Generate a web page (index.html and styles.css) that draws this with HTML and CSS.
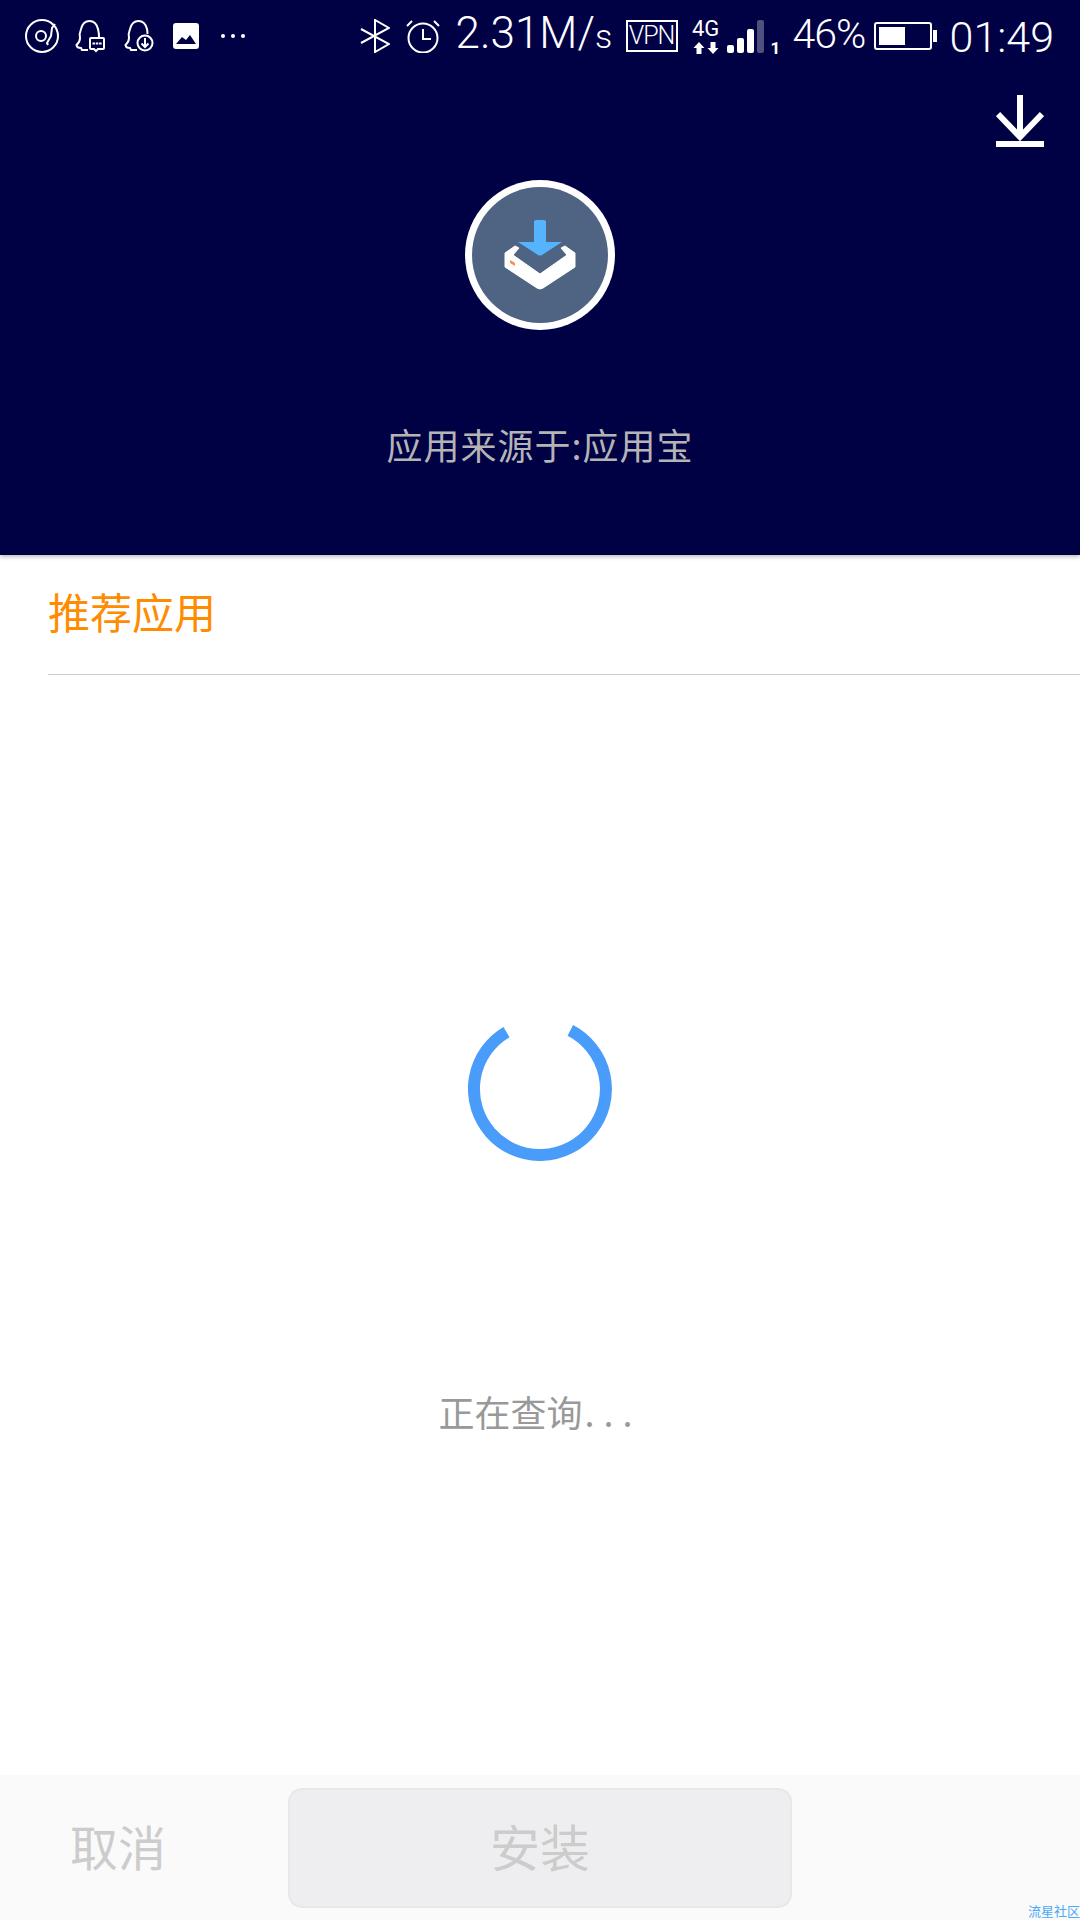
FILE: index.html
```html
<!DOCTYPE html>
<html lang="zh-Hans">
<head>
    <meta charset="UTF-8">
    <meta name="viewport" content="width=device-width, initial-scale=1.0">
    <title>应用安装</title>
    <link rel="stylesheet" href="styles.css">
</head>
<body>
    <div class="page">
        <header class="top">
            <div class="status">
                <div class="status-left">
                    <svg class="sicon" viewBox="0 0 34 34"><circle cx="17" cy="17" r="16" class="ln"/><circle cx="16" cy="17" r="5" class="ln"/><path d="M30 5 L27 9 L26 17 L22 24 L23 26" class="ln"/></svg>
                    <svg class="sicon" viewBox="0 0 34 34"><path d="M14 31 H8 L7 29 Q3 29 2.500 26 Q6 23 6 19 Q5 15 7 10 Q9 2 15.500 2 Q22 2 24 10 Q25 14 25 18" class="ln"/><path d="M17 19 H29 Q30 19 30 20 V29 Q30 30 29 30 H24 L22 32 L20 30 H17 Q16 30 16 29 V20 Q16 19 17 19 Z" class="ln"/><path d="M18.500 24.500h2.500M21.800 24.500h2.500M25.100 24.500h2.500" class="ln"/></svg>
                    <svg class="sicon" viewBox="0 0 34 34"><path d="M14 31 H8 L7 29 Q3 29 2.500 26 Q6 23 6 19 Q5 15 7 10 Q9 2 15.500 2 Q22 2 24 10 Q24.500 12 24.500 15" class="ln"/><circle cx="22" cy="24" r="7.500" class="ln"/><path d="M22 19v9M18.500 24.500l3.500 3.500 3.500-3.500" class="ln"/></svg>
                    <svg class="sicon" viewBox="0 0 34 34"><rect x="1" y="4" width="26" height="26" rx="3" fill="#fff"/><path d="M4 25 L10 18 L14 21 L18 16 L24 25 Z" fill="#000045"/></svg>
                    <div class="dots"><i></i><i></i><i></i></div>
                </div>
                <div class="status-right">
                    <svg class="bt" viewBox="0 0 30 34"><path d="M1 10 L29 25 L15 33 V1 L29 9 L1 24" class="ln"/></svg>
                    <svg class="alarm" viewBox="0 0 34 34"><circle cx="17" cy="19" r="14.500" class="ln"/><path d="M17 10v10h8" class="ln"/><path d="M1 7 L6 2M33 7 L28 2" class="ln"/></svg>
                    <span class="speed">2.31M/<span class="speed-unit">s</span></span>
                    <span class="vpn">VPN</span>
                    <div class="net">
                        <span class="net-label">4G</span>
                        <svg class="net-arrows" viewBox="0 0 26 12"><path d="M6 0 L11.500 6 H8.500 V12 H3.500 V6 H.5 Z M20 12 L25.500 6 H22.500 V0 H17.500 V6 H14.500 Z" fill="#fff"/></svg>
                    </div>
                    <div class="signal">
                        <i class="b1"></i><i class="b2"></i><i class="b3"></i><i class="b4"></i>
                    </div>
                    <span class="sim">1</span>
                    <span class="pct">46%</span>
                    <div class="battery"><div class="battery-fill"></div></div>
                    <span class="time">01:49</span>
                </div>
            </div>
            <div class="top-action">
                <svg class="dl" viewBox="0 0 48 52"><path d="M24 0 V42 M2 19 L24 42 L46 19" fill="none" stroke="#fff" stroke-width="6"/><rect y="46" width="48" height="6" fill="#fff"/></svg>
            </div>
            <div class="app-icon">
                <svg viewBox="7 7 136 136">
                    <path d="M50 66 L40 73 V87 L72 108 Q75 110 78 108 L110 87 V73 L100 66 L96 68 L102 75 L75 94 L48 75 L54 68 Z" fill="#fff" stroke="#fff" stroke-linejoin="round"/>
                    <path d="M45 80 L50 83 V86 L45 83 Z" fill="#ff8a4a"/>
                    <path d="M69 42 Q69 40 71 40 H79 Q81 40 81 42 V62 H97 L77 75 Q75 76 73 75 L53 62 H69 Z" fill="#56b4ff"/>
                </svg>
            </div>
            <p class="source">应用来源于:应用宝</p>
        </header>

        <section class="recommend">
            <h2 class="recommend-title">推荐应用</h2>
        </section>

        <div class="loading">
            <svg class="spinner" viewBox="0 0 144 144"><path d="M38.500 15.100 A66 66 0 1 0 102.300 13.400" fill="none" stroke="#4a9cfb" stroke-width="12"/></svg>
            <p class="loading-text">正在查询<span class="loading-dots">...</span></p>
        </div>

        <footer class="bottom">
            <a class="cancel">取消</a>
            <a class="install">安装</a>
            <span class="mark">流星社区</span>
        </footer>
    </div>
</body>
</html>
```

FILE: styles.css
```css
body {
    margin: 0;
    font-family: "Noto Sans CJK SC", "Noto Sans", sans-serif;
    background-color: #ffffff;
}
p, h2 {
    margin: 0;
    font-weight: 400;
}
.page {
    width: 1080px;
    height: 1920px;
    overflow: hidden;
    display: flex;
    flex-direction: column;
}
.ln {
    fill: none;
    stroke: #fff;
    stroke-width: 2;
}
.top {
    height: 555px;
    flex: none;
    background-color: #000045;
    box-shadow: 0 2px 4px rgba(0,0,0,0.25);
    position: relative;
    display: flex;
    flex-direction: column;
    color: #fff;
}
.status {
    height: 72px;
    display: flex;
    align-items: center;
    justify-content: space-between;
    padding: 0 26px 0 25px;
    font-family: Roboto, "Liberation Sans", sans-serif;
}
.status-left {
    display: flex;
    align-items: center;
    gap: 15px;
}
.status-right {
    display: flex;
    align-items: center;
}
.sicon {
    width: 34px;
    height: 34px;
}
.dots {
    width: 24px;
    display: flex;
    justify-content: space-between;
}
.dots i {
    width: 4px;
    height: 4px;
    border-radius: 50%;
    background: #fff;
}
.bt {
    width: 30px;
    height: 34px;
}
.alarm {
    width: 34px;
    height: 34px;
    margin-left: 16px;
}
.speed {
    margin-left: 16px;
    width: 150px;
    font-size: 44px;
    font-weight: 300;
    line-height: 50px;
    white-space: nowrap;
    margin-top: -3px;
}
.speed-unit {
    font-size: 34px;
}
.vpn {
    margin-left: 20px;
    width: 52px;
    height: 32px;
    box-sizing: border-box;
    border: 2px solid #fff;
    font-size: 25px;
    font-weight: 300;
    line-height: 28px;
    text-align: center;
    letter-spacing: -1px;
}
.net {
    margin-left: 14px;
    width: 28px;
    display: flex;
    flex-direction: column;
    align-items: center;
}
.net-label {
    font-size: 22px;
    line-height: 20px;
}
.net-arrows {
    width: 26px;
    height: 12px;
    margin-top: 3px;
}
.signal {
    margin-left: 7px;
    width: 37px;
    height: 34px;
    display: flex;
    align-items: flex-end;
    justify-content: space-between;
}
.signal i {
    width: 7px;
    background: #fff;
    border-radius: 2px;
}
.signal .b1 { height: 8px; }
.signal .b2 { height: 15px; }
.signal .b3 { height: 24px; }
.signal .b4 { height: 33px; background: #50507e; }
.sim {
    margin-left: 7px;
    width: 6px;
    font-size: 17px;
    font-weight: 700;
    line-height: 14px;
    align-self: flex-end;
    margin-bottom: 7px;
}
.pct {
    margin-left: 16px;
    width: 76px;
    font-size: 41px;
    font-weight: 300;
    letter-spacing: -1px;
    line-height: 50px;
    white-space: nowrap;
    margin-top: -5px;
}
.battery {
    margin-left: 5px;
    width: 58px;
    height: 28px;
    box-sizing: border-box;
    border: 2px solid #fff;
    border-radius: 3px;
    padding: 3px;
    position: relative;
}
.battery::after {
    content: "";
    position: absolute;
    right: -7px;
    top: 6px;
    width: 4px;
    height: 12px;
    background: #fff;
}
.battery-fill {
    width: 26px;
    height: 100%;
    background: #fff;
}
.time {
    margin-left: 18px;
    font-size: 43px;
    font-weight: 300;
    line-height: 50px;
    margin-top: 2px;
}
.top-action {
    display: flex;
    justify-content: flex-end;
    padding: 23px 36px 0 0;
}
.dl {
    width: 48px;
    height: 52px;
    display: block;
}
.app-icon {
    width: 150px;
    height: 150px;
    box-sizing: border-box;
    margin: 33px auto 0;
    border-radius: 50%;
    background: #fff;
    padding: 7px;
}
.app-icon svg {
    width: 136px;
    height: 136px;
    display: block;
    border-radius: 50%;
    background: #4f6482;
}
.source {
    margin-top: 89px;
    font-size: 36px;
    line-height: 50px;
    letter-spacing: 1px;
    color: #b4b4b4;
    text-align: center;
}
.recommend {
    margin-left: 48px;
    height: 120px;
    box-sizing: border-box;
    border-bottom: 1px solid #cfcfcf;
    display: flex;
    align-items: center;
}
.recommend-title {
    font-size: 42px;
    color: #ff8c00;
    line-height: 50px;
    margin-top: -8px;
}
.loading {
    display: flex;
    flex-direction: column;
    align-items: center;
}
.spinner {
    width: 144px;
    height: 144px;
    margin-top: 342px;
}
.loading-text {
    margin-top: 225px;
    font-size: 36px;
    line-height: 50px;
    color: #999999;
}
.loading-dots {
    letter-spacing: 9px;
    margin-left: 2px;
}
.bottom {
    margin-top: auto;
    height: 145px;
    background-color: #fafafa;
    position: relative;
    display: flex;
    align-items: flex-start;
    padding-top: 13px;
    box-sizing: border-box;
}
.cancel {
    width: 288px;
    box-sizing: border-box;
    padding-left: 70px;
    font-size: 48px;
    line-height: 114px;
    color: #cccccc;
}
.install {
    width: 504px;
    height: 120px;
    box-sizing: border-box;
    text-align: center;
    background: #eeeef0;
    border: 2px solid #e8e8e8;
    border-radius: 14px;
    font-size: 50px;
    line-height: 110px;
    color: #cccccc;
}
.mark {
    position: absolute;
    right: 0;
    bottom: 0;
    font-size: 13px;
    line-height: 18px;
    color: #4aa8f5;
}
```
